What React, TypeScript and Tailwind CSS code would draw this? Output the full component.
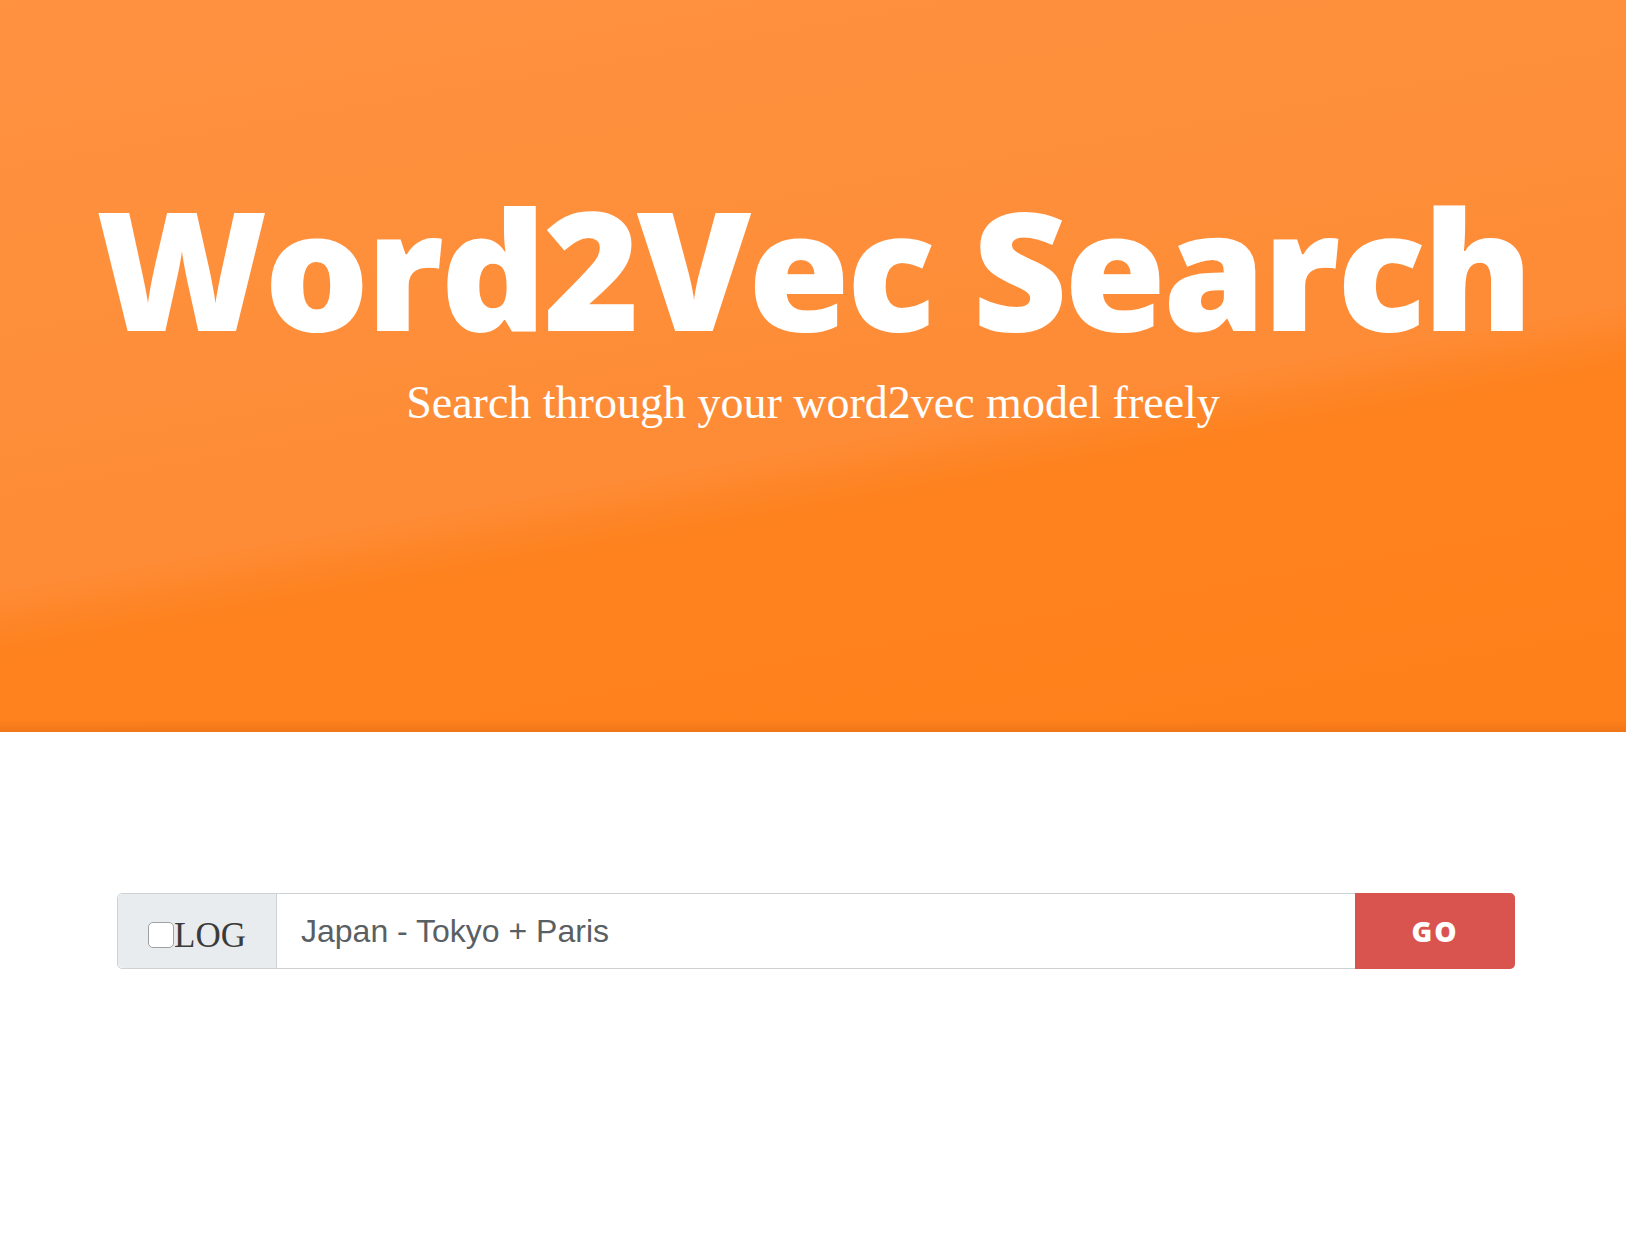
export default function App() {
  return (
    <div className="min-h-[1235px] bg-white">
      <header className="relative flex h-[732px] flex-col items-center bg-[linear-gradient(170deg,#ff9241_0%,#fe8e39_40%,#fe8b35_58%,#fe821e_64%,#fe801b_100%)]">
        <h1 className="mt-[185px] font-['Open_Sans',sans-serif] text-[165px] font-extrabold leading-none tracking-[-3.2px] text-white">
          Word2Vec Search
        </h1>
        <p className="mt-[30px] font-['Liberation_Serif',serif] text-[46px] leading-none text-white">
          Search through your word2vec model freely
        </p>
        <div className="absolute inset-x-0 bottom-0 h-[12px] bg-[linear-gradient(180deg,rgba(230,110,20,0),rgba(230,110,20,0.6))]" />
      </header>

      <main className="pt-[161px]">
        <div className="ml-[117px] flex h-[76px] w-[1398px] rounded-[5px] border border-[#cfd2d4]">
          <label className="flex w-[159px] shrink-0 items-center justify-center rounded-l-[5px] border-r border-[#cfd2d4] bg-[#e9ecee]">
            <span className="mt-[8px] h-[26px] w-[26px] rounded-[5px] border border-[#9ea2a5] bg-white" />
            <span className="mt-[8px] font-['Liberation_Serif',serif] text-[35px] leading-none text-[#3b3b3b]">LOG</span>
          </label>
          <div className="flex flex-1 items-center bg-white pl-[24px] font-['Liberation_Sans',Arial,sans-serif] text-[32px] text-[#5a5f63]">
            Japan - Tokyo + Paris
          </div>
          <button className="-my-px -mr-px w-[160px] rounded-r-[5px] bg-[#d9534f] font-['Open_Sans',sans-serif] text-[28px] font-extrabold tracking-[2px] text-white">
            GO
          </button>
        </div>
      </main>
    </div>
  )
}
